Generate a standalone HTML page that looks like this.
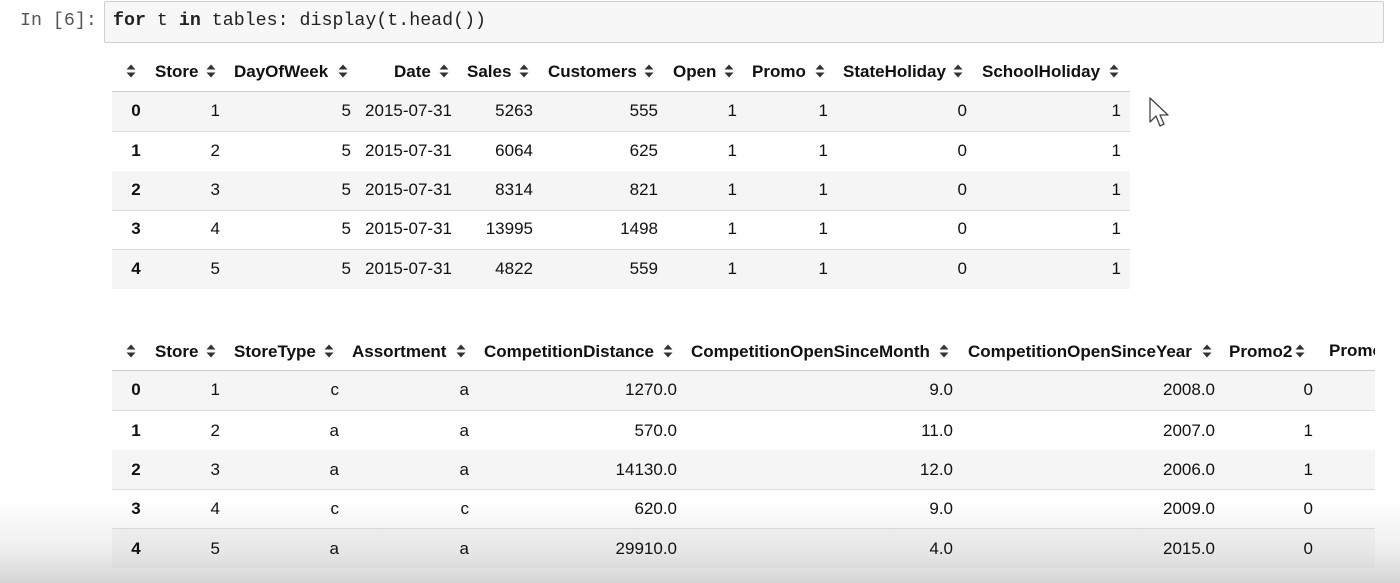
<!DOCTYPE html>
<html><head><meta charset="utf-8"><style>
body{margin:0;width:1400px;height:583px;background:#fff;position:relative;overflow:hidden;font-family:"Liberation Sans",Arial,sans-serif;color:#111;}
.code{position:absolute;left:104px;top:1px;width:1278px;height:40px;background:#f7f7f7;border:1px solid #cfcfcf;border-radius:2px;}
.mono{font-family:"Liberation Mono","DejaVu Sans Mono",monospace;font-size:18.3px;position:absolute;top:11px;z-index:3}
.row{position:absolute;left:112px;height:39px;border-bottom:1px solid #dcdcdc;}
.g{background:#f5f5f5}
.v,.h,.b{position:absolute;font-size:17px;white-space:nowrap;z-index:3}
.v{transform:translate(-100%,-50%)}
.h{transform:translateY(-50%);font-weight:bold;margin-top:2px}
.b{transform:translate(-50%,-50%);font-weight:bold}
.s{position:absolute;width:9px;height:13px;transform:translate(-50%,-50%);margin-top:1px;z-index:3}
.shade{position:absolute;left:0;top:500px;width:1400px;height:83px;background:linear-gradient(to bottom,rgba(200,200,200,0),rgba(200,200,200,.3) 60%,rgba(195,195,195,.7));z-index:2}
</style></head><body>
<div class="mono" style="left:20px;color:#555">In [6]:</div>
<div class="code"></div>
<div class="mono" style="left:113px;color:#222"><b>for</b> t <b>in</b> tables: display(t.head())</div>

<!-- table 1 -->
<div class="row g" style="top:92px;width:1018px"></div>
<div class="row" style="top:132px;width:1018px"></div>
<div class="row g" style="top:171px;width:1018px"></div>
<div class="row" style="top:210px;width:1018px"></div>
<div class="row g" style="top:250px;width:1018px;border-bottom:none"></div>
<div style="position:absolute;left:112px;top:91px;width:1018px;height:1px;background:#ccc"></div>

<svg class="s" style="left:131px;top:70px" viewBox="0 0 9 13"><path d="M4.5 0L9 5H0z M0 8H9L4.5 13z" fill="#333"/></svg>
<div class="h" style="left:155px;top:70px">Store</div><svg class="s" style="left:211px;top:70px" viewBox="0 0 9 13"><path d="M4.5 0L9 5H0z M0 8H9L4.5 13z" fill="#333"/></svg>
<div class="h" style="left:234px;top:70px">DayOfWeek</div><svg class="s" style="left:343px;top:70px" viewBox="0 0 9 13"><path d="M4.5 0L9 5H0z M0 8H9L4.5 13z" fill="#333"/></svg>
<div class="h" style="left:394px;top:70px">Date</div><svg class="s" style="left:444px;top:70px" viewBox="0 0 9 13"><path d="M4.5 0L9 5H0z M0 8H9L4.5 13z" fill="#333"/></svg>
<div class="h" style="left:467px;top:70px">Sales</div><svg class="s" style="left:524px;top:70px" viewBox="0 0 9 13"><path d="M4.5 0L9 5H0z M0 8H9L4.5 13z" fill="#333"/></svg>
<div class="h" style="left:548px;top:70px">Customers</div><svg class="s" style="left:649px;top:70px" viewBox="0 0 9 13"><path d="M4.5 0L9 5H0z M0 8H9L4.5 13z" fill="#333"/></svg>
<div class="h" style="left:673px;top:70px">Open</div><svg class="s" style="left:729px;top:70px" viewBox="0 0 9 13"><path d="M4.5 0L9 5H0z M0 8H9L4.5 13z" fill="#333"/></svg>
<div class="h" style="left:752px;top:70px">Promo</div><svg class="s" style="left:820px;top:70px" viewBox="0 0 9 13"><path d="M4.5 0L9 5H0z M0 8H9L4.5 13z" fill="#333"/></svg>
<div class="h" style="left:843px;top:70px">StateHoliday</div><svg class="s" style="left:958px;top:70px" viewBox="0 0 9 13"><path d="M4.5 0L9 5H0z M0 8H9L4.5 13z" fill="#333"/></svg>
<div class="h" style="left:982px;top:70px">SchoolHoliday</div><svg class="s" style="left:1114px;top:70px" viewBox="0 0 9 13"><path d="M4.5 0L9 5H0z M0 8H9L4.5 13z" fill="#333"/></svg>

<div class="b" style="left:136px;top:111px">0</div><div class="v" style="left:220px;top:111px">1</div><div class="v" style="left:351px;top:111px">5</div><div class="v" style="left:452px;top:111px">2015-07-31</div><div class="v" style="left:533px;top:111px">5263</div><div class="v" style="left:658px;top:111px">555</div><div class="v" style="left:737px;top:111px">1</div><div class="v" style="left:828px;top:111px">1</div><div class="v" style="left:967px;top:111px">0</div><div class="v" style="left:1121px;top:111px">1</div>
<div class="b" style="left:136px;top:151px">1</div><div class="v" style="left:220px;top:151px">2</div><div class="v" style="left:351px;top:151px">5</div><div class="v" style="left:452px;top:151px">2015-07-31</div><div class="v" style="left:533px;top:151px">6064</div><div class="v" style="left:658px;top:151px">625</div><div class="v" style="left:737px;top:151px">1</div><div class="v" style="left:828px;top:151px">1</div><div class="v" style="left:967px;top:151px">0</div><div class="v" style="left:1121px;top:151px">1</div>
<div class="b" style="left:136px;top:190px">2</div><div class="v" style="left:220px;top:190px">3</div><div class="v" style="left:351px;top:190px">5</div><div class="v" style="left:452px;top:190px">2015-07-31</div><div class="v" style="left:533px;top:190px">8314</div><div class="v" style="left:658px;top:190px">821</div><div class="v" style="left:737px;top:190px">1</div><div class="v" style="left:828px;top:190px">1</div><div class="v" style="left:967px;top:190px">0</div><div class="v" style="left:1121px;top:190px">1</div>
<div class="b" style="left:136px;top:229px">3</div><div class="v" style="left:220px;top:229px">4</div><div class="v" style="left:351px;top:229px">5</div><div class="v" style="left:452px;top:229px">2015-07-31</div><div class="v" style="left:533px;top:229px">13995</div><div class="v" style="left:658px;top:229px">1498</div><div class="v" style="left:737px;top:229px">1</div><div class="v" style="left:828px;top:229px">1</div><div class="v" style="left:967px;top:229px">0</div><div class="v" style="left:1121px;top:229px">1</div>
<div class="b" style="left:136px;top:269px">4</div><div class="v" style="left:220px;top:269px">5</div><div class="v" style="left:351px;top:269px">5</div><div class="v" style="left:452px;top:269px">2015-07-31</div><div class="v" style="left:533px;top:269px">4822</div><div class="v" style="left:658px;top:269px">559</div><div class="v" style="left:737px;top:269px">1</div><div class="v" style="left:828px;top:269px">1</div><div class="v" style="left:967px;top:269px">0</div><div class="v" style="left:1121px;top:269px">1</div>

<!-- cursor -->
<svg style="position:absolute;left:1149px;top:97px" width="22" height="32" viewBox="0 0 22 32"><path d="M1 1V25L7 19L11 29L15 27L11 18H19Z" fill="#fff" stroke="#444" stroke-width="1.3" stroke-linejoin="round"/></svg>

<!-- table 2 -->
<div class="row g" style="top:371px;width:1263px"></div>
<div class="row" style="top:411px;width:1263px"></div>
<div class="row g" style="top:450px;width:1263px"></div>
<div class="row" style="top:489px;width:1263px"></div>
<div class="row g" style="top:529px;width:1263px;border-bottom:none"></div>
<div style="position:absolute;left:112px;top:370px;width:1263px;height:1px;background:#ccc"></div>

<svg class="s" style="left:131px;top:350px" viewBox="0 0 9 13"><path d="M4.5 0L9 5H0z M0 8H9L4.5 13z" fill="#333"/></svg>
<div class="h" style="left:155px;top:350px">Store</div><svg class="s" style="left:211px;top:350px" viewBox="0 0 9 13"><path d="M4.5 0L9 5H0z M0 8H9L4.5 13z" fill="#333"/></svg>
<div class="h" style="left:234px;top:350px">StoreType</div><svg class="s" style="left:329px;top:350px" viewBox="0 0 9 13"><path d="M4.5 0L9 5H0z M0 8H9L4.5 13z" fill="#333"/></svg>
<div class="h" style="left:352px;top:350px">Assortment</div><svg class="s" style="left:461px;top:350px" viewBox="0 0 9 13"><path d="M4.5 0L9 5H0z M0 8H9L4.5 13z" fill="#333"/></svg>
<div class="h" style="left:484px;top:350px">CompetitionDistance</div><svg class="s" style="left:668px;top:350px" viewBox="0 0 9 13"><path d="M4.5 0L9 5H0z M0 8H9L4.5 13z" fill="#333"/></svg>
<div class="h" style="left:691px;top:350px">CompetitionOpenSinceMonth</div><svg class="s" style="left:944px;top:350px" viewBox="0 0 9 13"><path d="M4.5 0L9 5H0z M0 8H9L4.5 13z" fill="#333"/></svg>
<div class="h" style="left:968px;top:350px">CompetitionOpenSinceYear</div><svg class="s" style="left:1207px;top:350px" viewBox="0 0 9 13"><path d="M4.5 0L9 5H0z M0 8H9L4.5 13z" fill="#333"/></svg>
<div class="h" style="left:1229px;top:350px">Promo2</div><svg class="s" style="left:1300px;top:350px" viewBox="0 0 9 13"><path d="M4.5 0L9 5H0z M0 8H9L4.5 13z" fill="#333"/></svg>
<div style="position:absolute;left:1329px;top:338px;width:46px;height:26px;overflow:hidden;z-index:3"><div class="h" style="left:0;top:11px">Promo2SinceWeek</div></div>

<div class="b" style="left:136px;top:390px">0</div><div class="v" style="left:220px;top:390px">1</div><div class="v" style="left:339px;top:390px">c</div><div class="v" style="left:469px;top:390px">a</div><div class="v" style="left:677px;top:390px">1270.0</div><div class="v" style="left:953px;top:390px">9.0</div><div class="v" style="left:1215px;top:390px">2008.0</div><div class="v" style="left:1313px;top:390px">0</div>
<div class="b" style="left:136px;top:431px">1</div><div class="v" style="left:220px;top:431px">2</div><div class="v" style="left:339px;top:431px">a</div><div class="v" style="left:469px;top:431px">a</div><div class="v" style="left:677px;top:431px">570.0</div><div class="v" style="left:953px;top:431px">11.0</div><div class="v" style="left:1215px;top:431px">2007.0</div><div class="v" style="left:1313px;top:431px">1</div>
<div class="b" style="left:136px;top:470px">2</div><div class="v" style="left:220px;top:470px">3</div><div class="v" style="left:339px;top:470px">a</div><div class="v" style="left:469px;top:470px">a</div><div class="v" style="left:677px;top:470px">14130.0</div><div class="v" style="left:953px;top:470px">12.0</div><div class="v" style="left:1215px;top:470px">2006.0</div><div class="v" style="left:1313px;top:470px">1</div>
<div class="b" style="left:136px;top:509px">3</div><div class="v" style="left:220px;top:509px">4</div><div class="v" style="left:339px;top:509px">c</div><div class="v" style="left:469px;top:509px">c</div><div class="v" style="left:677px;top:509px">620.0</div><div class="v" style="left:953px;top:509px">9.0</div><div class="v" style="left:1215px;top:509px">2009.0</div><div class="v" style="left:1313px;top:509px">0</div>
<div class="b" style="left:136px;top:549px">4</div><div class="v" style="left:220px;top:549px">5</div><div class="v" style="left:339px;top:549px">a</div><div class="v" style="left:469px;top:549px">a</div><div class="v" style="left:677px;top:549px">29910.0</div><div class="v" style="left:953px;top:549px">4.0</div><div class="v" style="left:1215px;top:549px">2015.0</div><div class="v" style="left:1313px;top:549px">0</div>

<div class="shade"></div>
</body></html>
